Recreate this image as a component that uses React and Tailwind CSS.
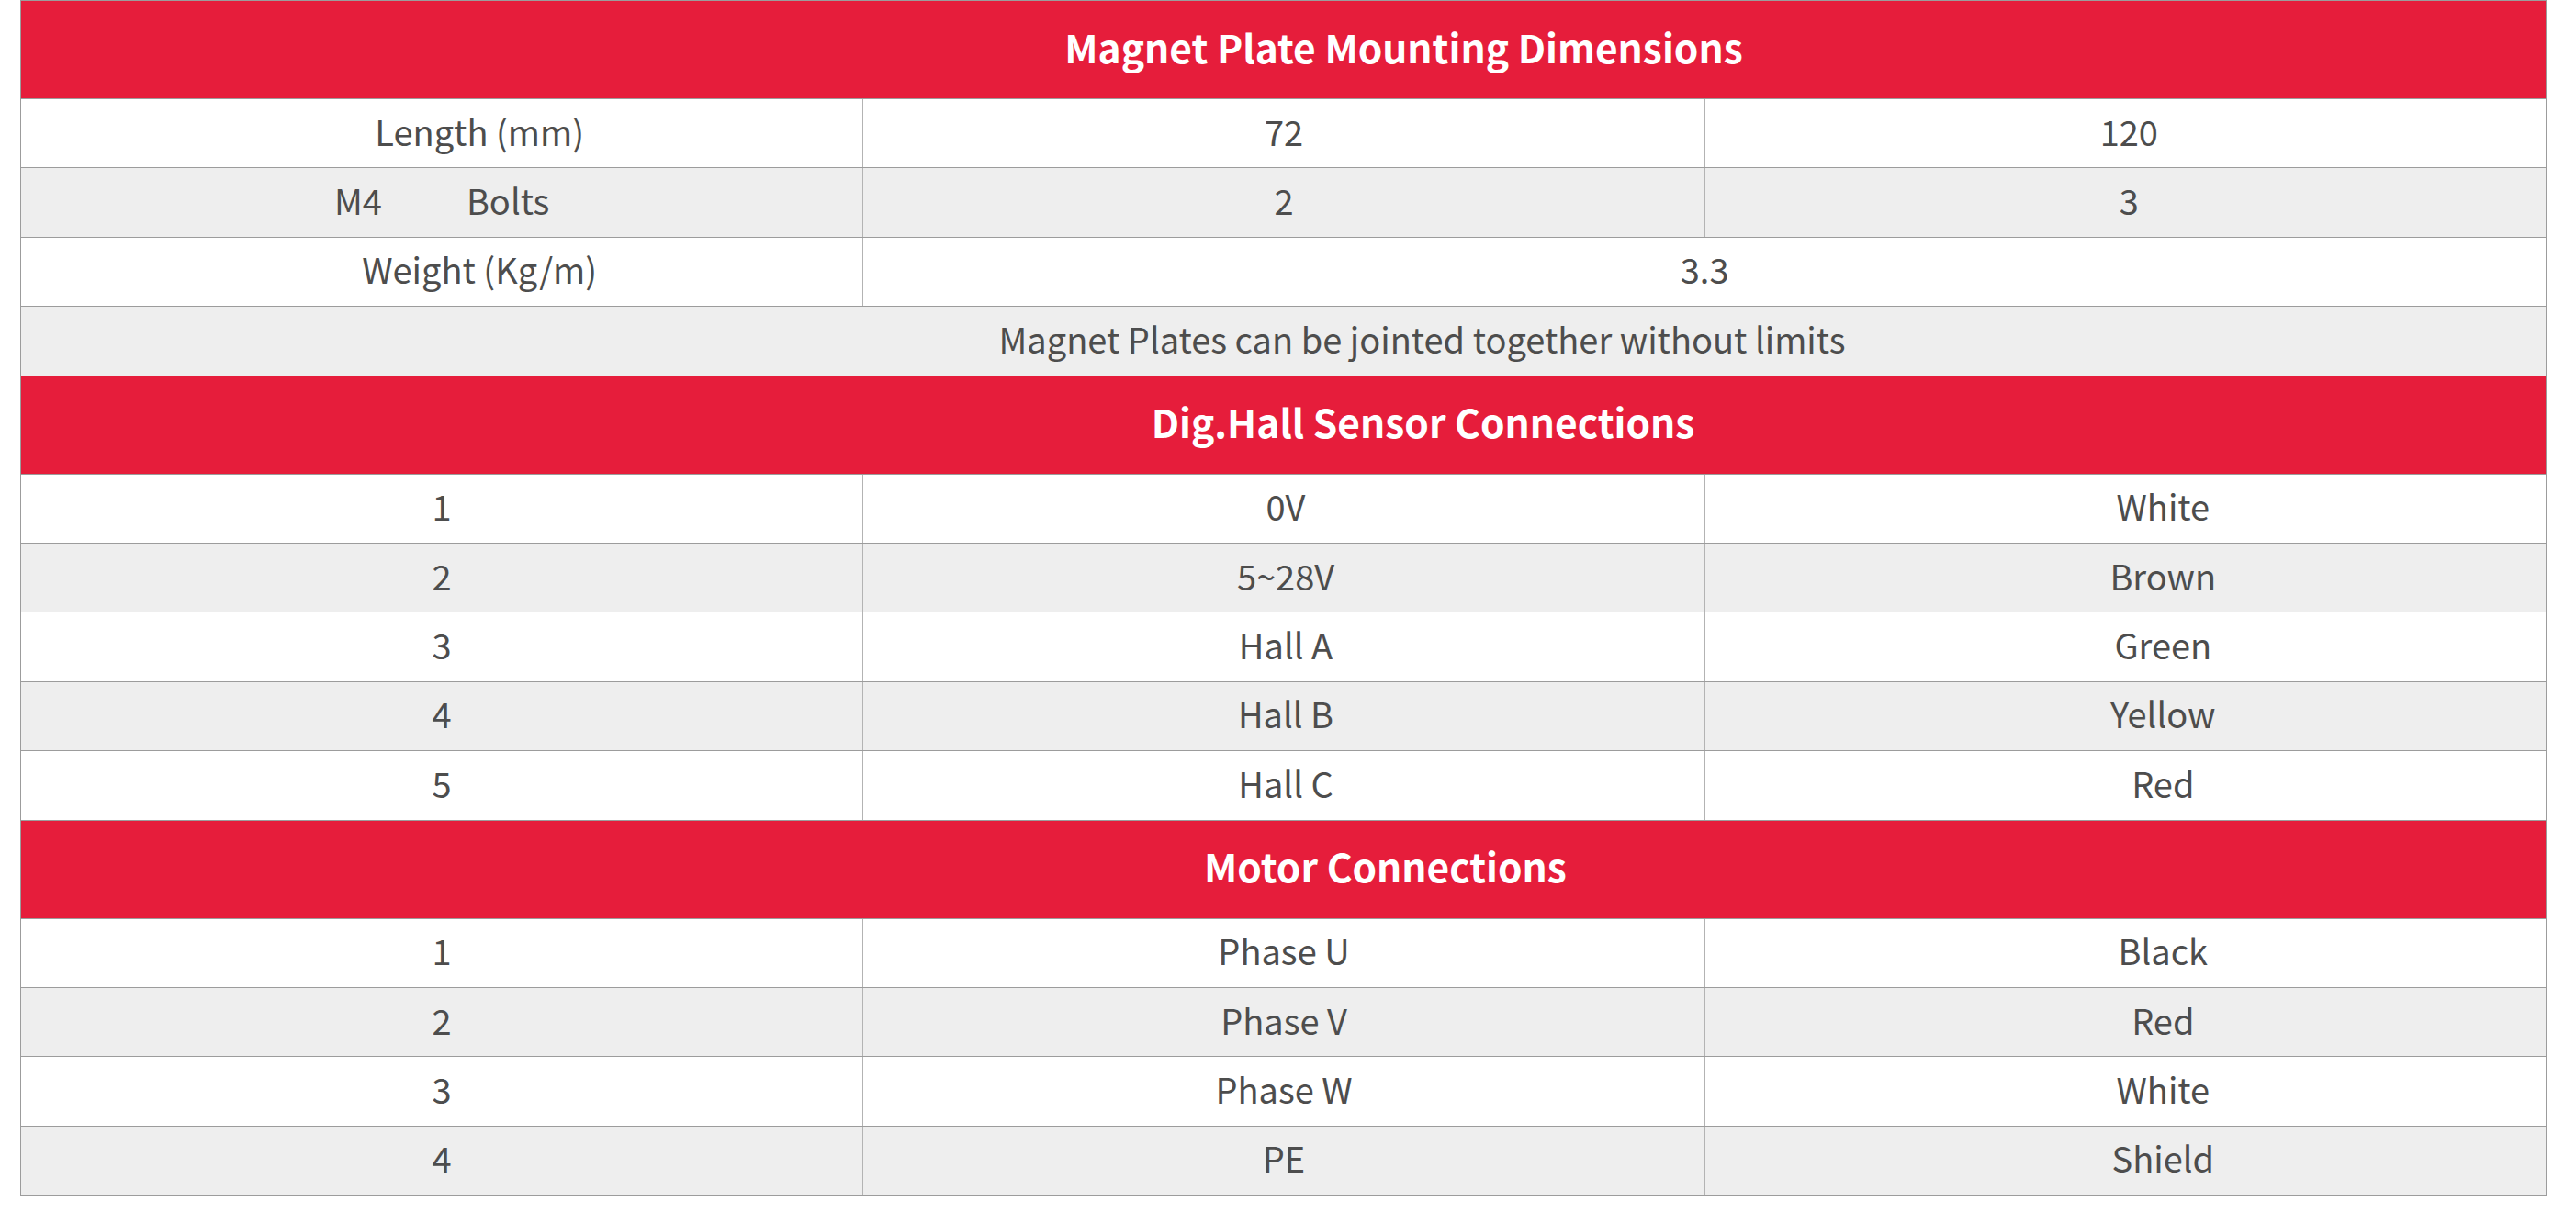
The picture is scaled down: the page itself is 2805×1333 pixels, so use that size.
import React from "react";

const FONT = { fontFamily: '"Noto Sans CJK SC", "Noto Sans", sans-serif' };

function Header({ children, pad }) {
  return (
    <div className={`h-[107px] bg-[#e61d3b] border-b border-[#9c9c9c] flex items-center justify-center pb-[6px] text-white font-bold text-[42.5px] ${pad}`}>
      <span className="leading-none">{children}</span>
    </div>
  );
}

function Row({ gray, cells }) {
  return (
    <div className={`h-[75.4px] grid grid-cols-3 border-b border-[#9c9c9c] ${gray ? "bg-[#eeeeee]" : "bg-white"}`}>
      {cells.map((c, i) => (
        <div
          key={i}
          className={`flex items-center justify-center pb-[5px] text-[38px] text-[#4d4d4d] ${i > 0 ? "border-l border-[#b3b3b3]" : ""} ${c.span === 2 ? "col-span-2" : ""} ${c.span === 3 ? "col-span-3" : ""} ${c.pad || ""}`}
        >
          <span className="leading-none">{c.t}</span>
        </div>
      ))}
    </div>
  );
}

export default function App() {
  const hall = [
    ["1", "0V", "White"],
    ["2", "5~28V", "Brown"],
    ["3", "Hall A", "Green"],
    ["4", "Hall B", "Yellow"],
    ["5", "Hall C", "Red"],
  ];
  const motor = [
    ["1", "Phase U", "Black"],
    ["2", "Phase V", "Red"],
    ["3", "Phase W", "White"],
    ["4", "PE", "Shield"],
  ];
  return (
    <div className="w-[2805px] h-[1333px] bg-white" style={FONT}>
      <div className="ml-[22px] w-[2751px] border border-b-0 border-[#9c9c9c]">
        <Header pad="pl-[262px]">Magnet Plate Mounting Dimensions</Header>
        <Row cells={[{ t: "Length (mm)", pad: "pl-[82px]" }, { t: "72" }, { t: "120", pad: "pl-[8px]" }]} />
        <Row
          gray
          cells={[
            {
              t: (
                <>
                  M4<span className="inline-block w-[92px]" />Bolts
                </>
              ),
            },
            { t: "2" },
            { t: "3", pad: "pl-[8px]" },
          ]}
        />
        <Row cells={[{ t: "Weight (Kg/m)", pad: "pl-[82px]" }, { t: "3.3", span: 2 }]} />
        <Row gray cells={[{ t: "Magnet Plates can be jointed together without limits", span: 3, pad: "pl-[302px]" }]} />
        <Header pad="pl-[304px]">Dig.Hall Sensor Connections</Header>
        {hall.map((r, i) => (
          <Row key={i} gray={i % 2 === 1} cells={[{ t: r[0] }, { t: r[1], pad: "pl-[4px]" }, { t: r[2], pad: "pl-[82px]" }]} />
        ))}
        <Header pad="pl-[222px]">Motor Connections</Header>
        {motor.map((r, i) => (
          <Row key={i} gray={i % 2 === 1} cells={[{ t: r[0] }, { t: r[1] }, { t: r[2], pad: "pl-[82px]" }]} />
        ))}
      </div>
    </div>
  );
}
